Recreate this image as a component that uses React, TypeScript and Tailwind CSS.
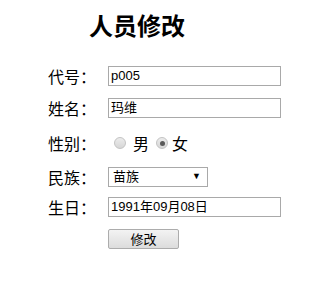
const cjk = { fontFamily: '"Noto Sans CJK SC", "Liberation Sans", sans-serif' }
const inputFont = { fontFamily: '"Liberation Sans", "Noto Sans CJK SC", sans-serif' }

function Label({ text }: { text: string }) {
  return (
    <div className="w-[60px] shrink-0 text-[16px] leading-[20px] text-black" style={cjk}>
      {text}
    </div>
  )
}

function TextBox({ value, className = "" }: { value: string; className?: string }) {
  return (
    <div
      className={`flex h-[20px] w-[173px] items-center border border-[#a9a9a9] bg-white pl-[2px] text-[13px] text-black ${className}`}
      style={inputFont}
    >
      {value}
    </div>
  )
}

function Radio({ checked }: { checked?: boolean }) {
  return (
    <span className="flex h-[12px] w-[12px] items-center justify-center rounded-full border border-[#c3c3c3] bg-gradient-to-b from-[#ececec] to-[#d6d6d6]">
      {checked && <span className="h-[5px] w-[5px] rounded-full bg-[#5a5a5a]" />}
    </span>
  )
}

export default function App() {
  return (
    <div className="h-[282px] w-[335px] bg-white pl-[48px] pt-[12px]">
      <h1 className="ml-[41px] text-[24px] font-bold leading-[26px] text-black" style={cjk}>
        人员修改
      </h1>

      <div className="mt-[28px] flex items-center">
        <Label text="代号：" />
        <TextBox value="p005" className="text-[#3a3a4a]" />
      </div>

      <div className="mt-[12px] flex items-center">
        <Label text="姓名：" />
        <TextBox value="玛维" />
      </div>

      <div className="mt-[15px] flex h-[20px] items-center">
        <Label text="性别：" />
        <div className="ml-[6px] flex items-center text-[16px] leading-[20px]" style={cjk}>
          <Radio />
          <span className="ml-[7px]">男</span>
          <span className="ml-[7px]">
            <Radio checked />
          </span>
          <span className="ml-[4px]">女</span>
        </div>
      </div>

      <div className="mt-[14px] flex items-center">
        <Label text="民族：" />
        <div
          className="flex h-[20px] w-[100px] items-center justify-between border border-[#a9a9a9] bg-white pl-[4px] pr-[6px] text-[13px] text-black"
          style={inputFont}
        >
          <span>苗族</span>
          <span className="text-[9px]">▼</span>
        </div>
      </div>

      <div className="mt-[10px] flex items-center">
        <Label text="生日：" />
        <TextBox value="1991年09月08日" />
      </div>

      <div className="mt-[12px] flex items-center">
        <div className="w-[60px] shrink-0" />
        <button
          className="flex h-[20px] w-[71px] items-center justify-center rounded-[2px] border border-[#acacac] bg-gradient-to-b from-[#f3f3f3] to-[#dcdcdc] text-[13px] text-black"
          style={cjk}
        >
          修改
        </button>
      </div>
    </div>
  )
}
